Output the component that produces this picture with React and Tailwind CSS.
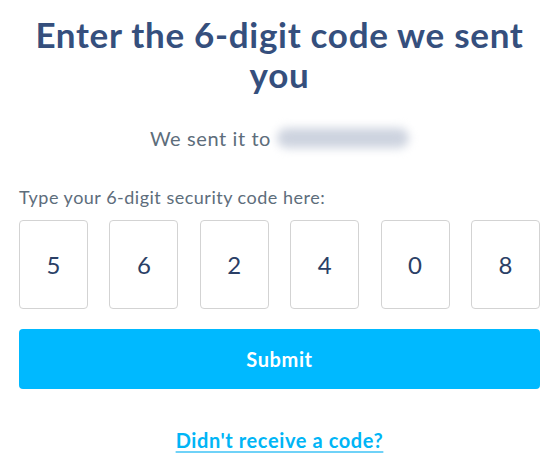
const digits = ['5', '6', '2', '4', '0', '8'];

export default function App() {
    return (
        <div className="w-[557px] h-[476px] bg-white font-['Lato',sans-serif] pl-[19px] pr-[17px] box-border">
            <h1 className="pt-[14px] mx-auto max-w-[500px] text-center text-[35px] leading-[40px] font-bold text-[#354f7d] tracking-[0.7px]">
                Enter the 6-digit code we sent you
            </h1>
            <div className="mt-[30px] h-[28px] flex justify-center items-center text-[20px] tracking-[0.6px] text-[#5d6d7b]">
                <span>We sent it to</span>
                <span className="inline-block w-[132px] h-[20px] rounded-full bg-[#cdd3df] blur-[5px] ml-[6px]"></span>
            </div>
            <p className="mt-[34px] text-[18px] tracking-[0.5px] text-[#5d6d7b] leading-[22px]">Type your 6-digit security code here:</p>
            <div className="mt-[12px] flex justify-between">
                {digits.map((d, i) => (
                    <div key={i} className="w-[69px] h-[89px] border border-[#d3d3d3] rounded-[4px] flex items-center justify-center text-[24px] text-[#2b3f66]">
                        {d}
                    </div>
                ))}
            </div>
            <button className="mt-[20px] w-full h-[60px] rounded-[4px] bg-[#00b9ff] text-white text-[20px] tracking-[0.6px] font-bold">
                Submit
            </button>
            <div className="mt-[38px] h-[26px] text-center leading-[26px]">
                <a href="#" className="text-[20px] font-bold tracking-[0.6px] text-[#00b5f6] underline decoration-[#6fd2f8] decoration-2 underline-offset-[3px]">Didn't receive a code?</a>
            </div>
        </div>
    );
}
